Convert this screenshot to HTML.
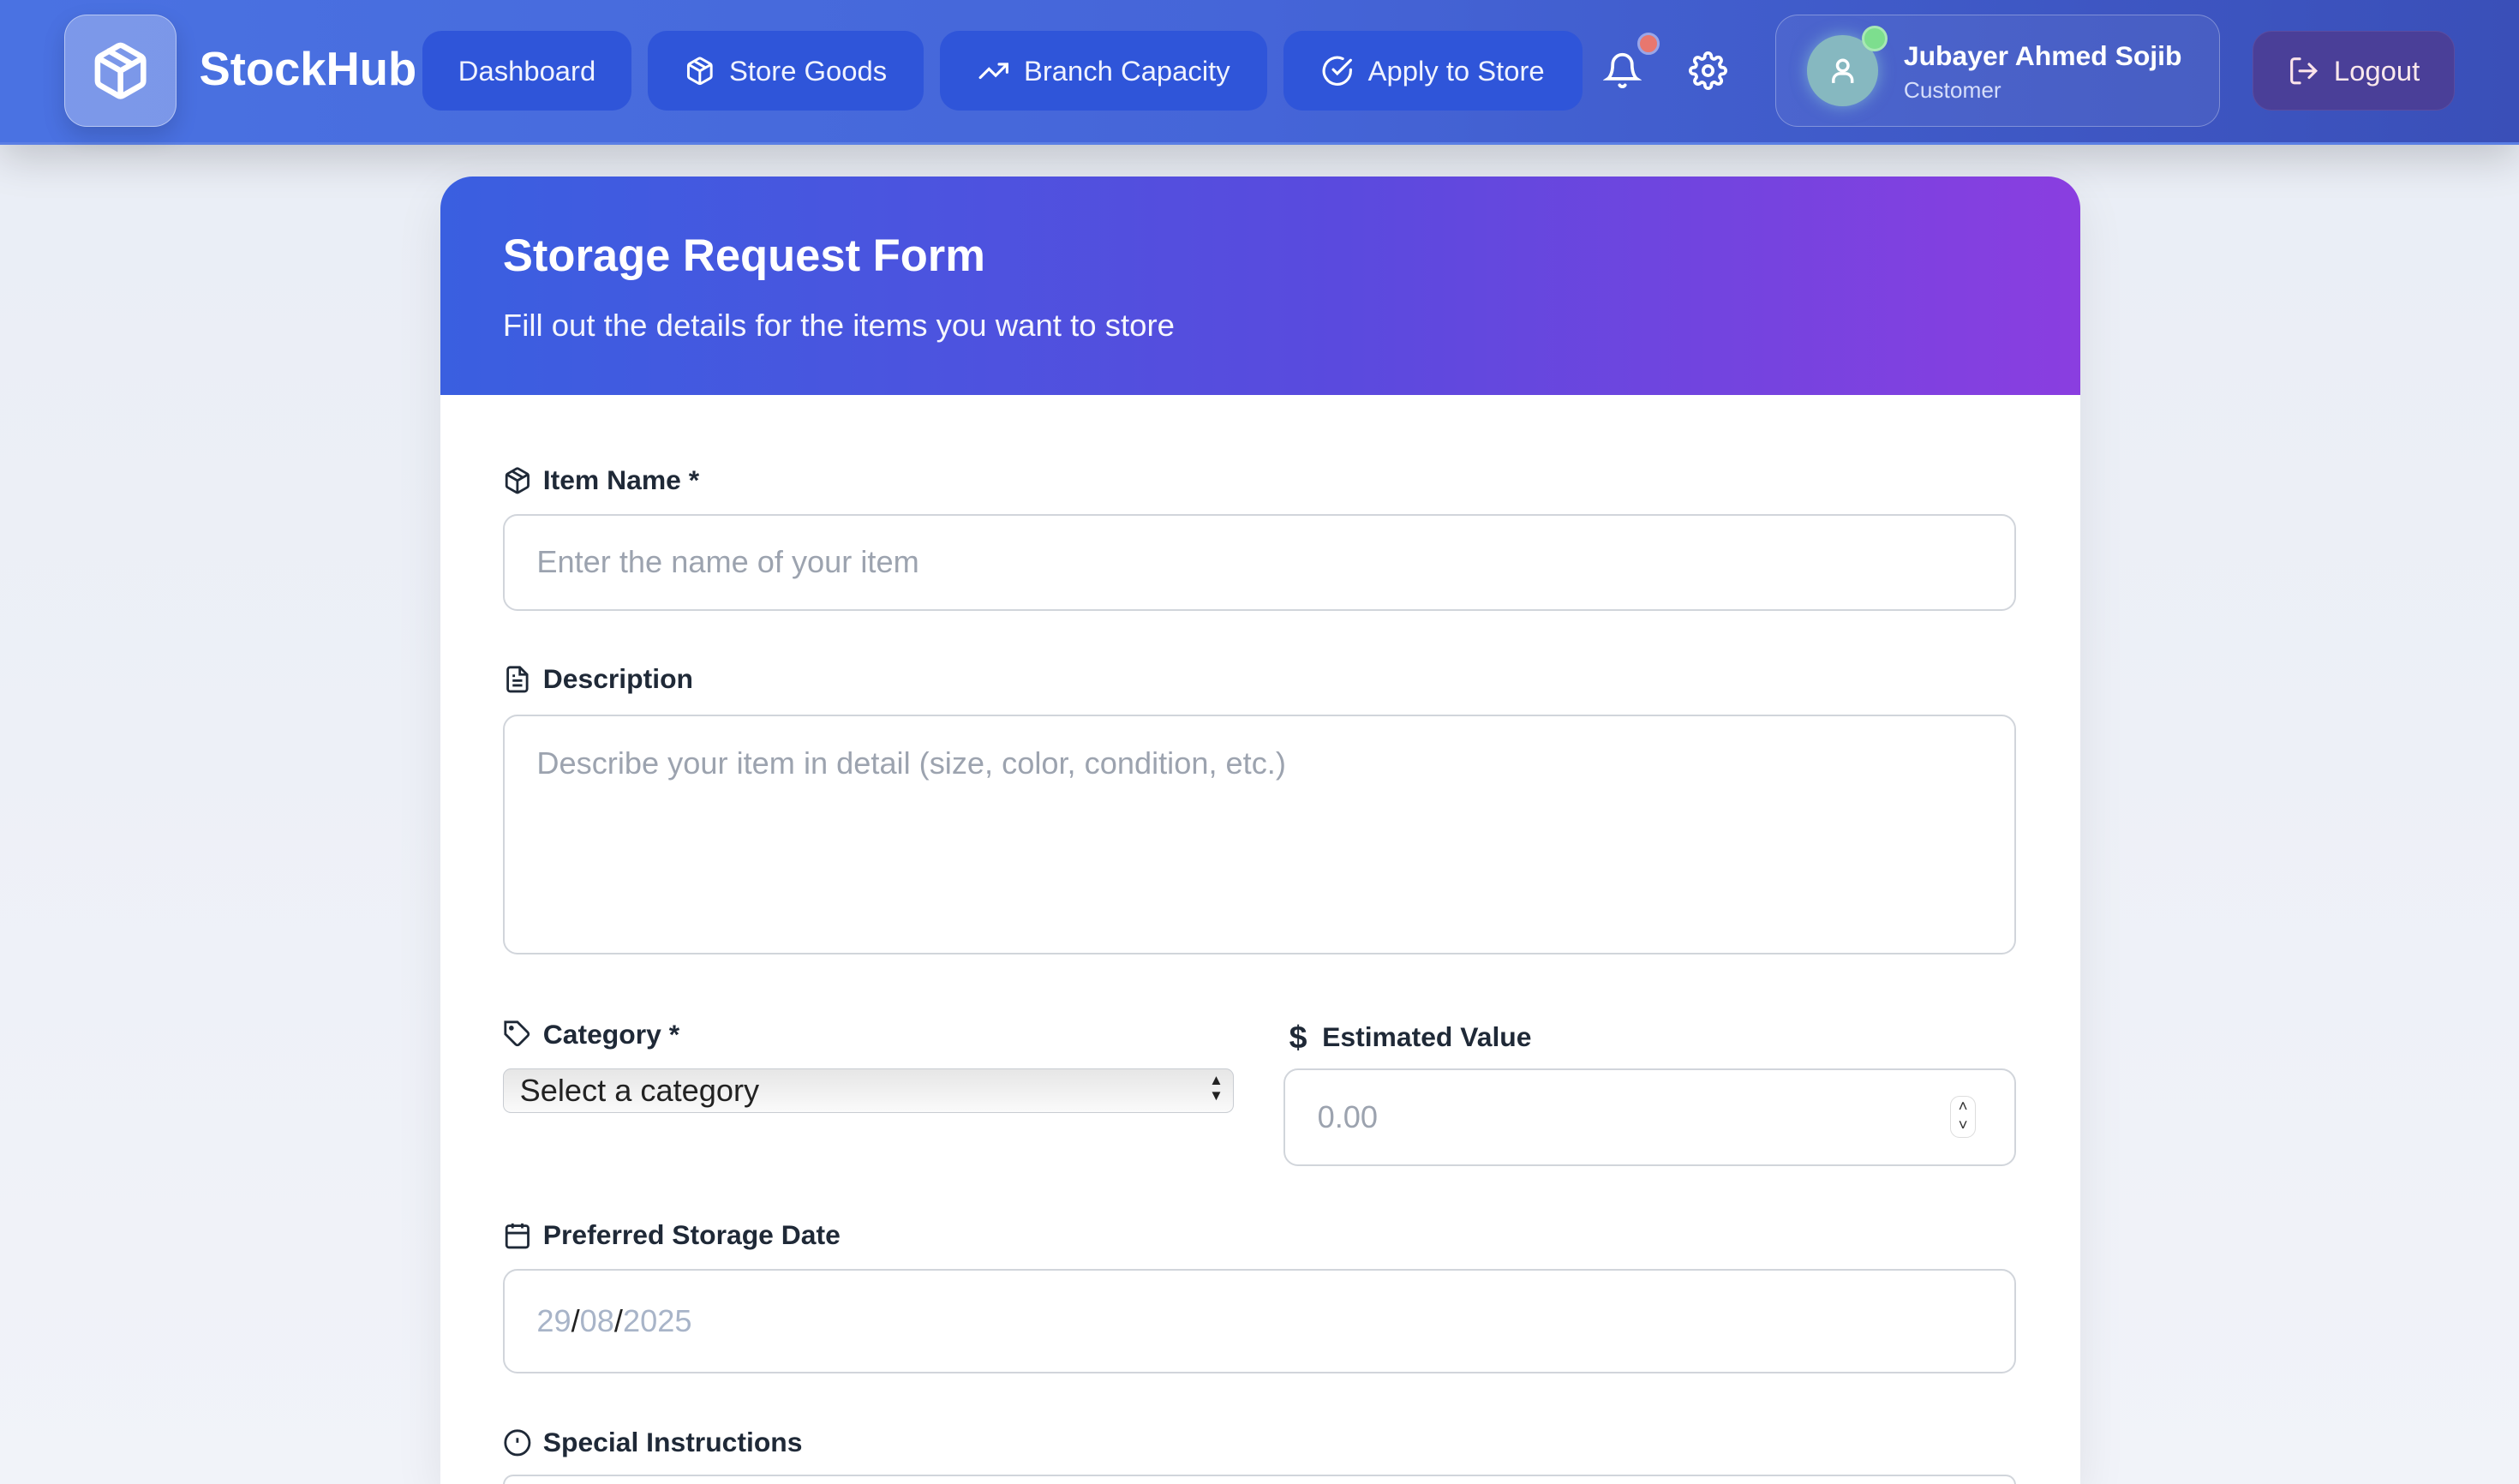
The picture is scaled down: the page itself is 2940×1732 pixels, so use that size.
<!DOCTYPE html>
<html><head><meta charset="utf-8"><style>
*{box-sizing:border-box;margin:0;padding:0}
html,body{width:2940px;height:1732px;overflow:hidden}
body{background:#eef1f7;font-family:"Liberation Sans",sans-serif}
#r{zoom:1.875;width:1568px;height:924px;position:relative;overflow:hidden;background:linear-gradient(180deg,#e9edf5,#f1f3f9)}
.hdr{position:absolute;left:0;top:0;width:1568px;height:90px;background:linear-gradient(90deg,#4a72e2,#4565d8 50%,#3a4fb8);border-bottom:2px solid #5b7fe4;box-shadow:0 8px 24px rgba(0,0,0,.18)}
.abs{position:absolute}
.logo{left:40px;top:9px;width:70px;height:70px;border-radius:14px;background:rgba(255,255,255,.28);border:1px solid rgba(255,255,255,.45);display:flex;align-items:center;justify-content:center;box-shadow:0 6px 14px rgba(0,0,0,.15)}
.brand{left:124px;top:26px;font-size:29px;font-weight:bold;color:#fff}
.nb{top:19px;height:50px;border-radius:12px;background:#2f55d9;color:#f0f3ff;font-size:17.5px;display:flex;align-items:center;justify-content:center;gap:9px}
.user{left:1105px;top:9px;width:277px;height:70px;border-radius:14px;border:1px solid rgba(255,255,255,.3);background:rgba(255,255,255,.06)}
.card{left:274px;top:110px;width:1021px;height:814px;border-radius:20px 20px 0 0;background:#fff;overflow:hidden;box-shadow:0 10px 30px rgba(0,0,0,.08)}
.ch{height:136px;background:linear-gradient(90deg,#3a5fe0,#5a4ade 55%,#8a3ee0);color:#fff;padding:33px 39px}
.ch h1{font-size:28px;font-weight:bold}
.ch p{font-size:19.5px;margin-top:16px;opacity:.95}
.lab{font-size:17px;font-weight:bold;color:#1f2937;display:flex;align-items:center;gap:7px}
.inp{border:1.5px solid #d1d5db;border-radius:9px;background:#fff;font-size:19.3px;color:#9ca3af;padding-left:20px;display:flex;align-items:center}
</style></head><body><div id="r">
<div class="hdr">
 <div class="abs logo"><svg width="38" height="38" viewBox="0 0 24 24" fill="none" stroke="#fff" stroke-width="2.2" stroke-linecap="round" stroke-linejoin="round"><path d="M21 16V8a2 2 0 0 0-1-1.73l-7-4a2 2 0 0 0-2 0l-7 4A2 2 0 0 0 3 8v8a2 2 0 0 0 1 1.730l7 4a2 2 0 0 0 2 0l7-4A2 2 0 0 0 21 16z"/><path d="M3.3 7L12 12l8.7-5M12 22V12M7.5 4.2l9 5.2"/></svg></div>
 <div class="abs brand">StockHub</div>
 <div class="abs nb" style="left:263px;width:130px">Dashboard</div>
 <div class="abs nb" style="left:403px;width:172px"><svg width="19" height="19" viewBox="0 0 24 24" fill="none" stroke="#fff" stroke-width="2"><path d="M21 16V8a2 2 0 0 0-1-1.73l-7-4a2 2 0 0 0-2 0l-7 4A2 2 0 0 0 3 8v8a2 2 0 0 0 1 1.73l7 4a2 2 0 0 0 2 0l7-4A2 2 0 0 0 21 16z"/><path d="M3.3 7L12 12l8.7-5M12 22V12M7.5 4.2l9 5.2"/></svg>Store Goods</div>
 <div class="abs nb" style="left:585px;width:204px"><svg width="20" height="20" viewBox="0 0 24 24" fill="none" stroke="#fff" stroke-width="2" stroke-linecap="round"><path d="M22 7l-8.5 8.5-5-5L2 17M16 7h6v6"/></svg>Branch Capacity</div>
 <div class="abs nb" style="left:799px;width:186px"><svg width="20" height="20" viewBox="0 0 24 24" fill="none" stroke="#fff" stroke-width="2" stroke-linecap="round"><path d="M22 11.1V12a10 10 0 1 1-5.9-9.1"/><path d="M22 4L12 14l-3-3"/></svg>Apply to Store</div>
 <svg class="abs" style="left:998px;top:32px" width="24" height="24" viewBox="0 0 24 24" fill="none" stroke="#fff" stroke-width="2" stroke-linecap="round"><path d="M18 8A6 6 0 0 0 6 8c0 7-3 9-3 9h18s-3-2-3-9M13.7 21a2 2 0 0 1-3.4 0"/></svg>
 <div class="abs" style="left:1019px;top:20px;width:14px;height:14px;border-radius:50%;background:#e8776e;border:2px solid #9aa6e8"></div>
 <svg class="abs" style="left:1051px;top:32px" width="24" height="24" viewBox="0 0 24 24" fill="none" stroke="#fff" stroke-width="2"><circle cx="12" cy="12" r="3"/><path d="M19.4 15a1.65 1.65 0 0 0 .33 1.82l.06.06a2 2 0 1 1-2.83 2.83l-.06-.06a1.65 1.65 0 0 0-1.82-.33 1.65 1.65 0 0 0-1 1.51V21a2 2 0 1 1-4 0v-.09A1.65 1.65 0 0 0 9 19.4a1.65 1.65 0 0 0-1.82.33l-.06.06a2 2 0 1 1-2.83-2.83l.06-.06A1.65 1.65 0 0 0 4.6 15a1.65 1.65 0 0 0-1.51-1H3a2 2 0 1 1 0-4h.09A1.65 1.65 0 0 0 4.6 9a1.65 1.65 0 0 0-.33-1.82l-.06-.06a2 2 0 1 1 2.83-2.830l.06.06A1.65 1.65 0 0 0 9 4.6a1.65 1.65 0 0 0 1-1.51V3a2 2 0 1 1 4 0v.09a1.65 1.65 0 0 0 1 1.51 1.65 1.65 0 0 0 1.82-.33l.06-.06a2 2 0 1 1 2.83 2.83l-.06.06A1.65 1.65 0 0 0 19.4 9a1.65 1.65 0 0 0 1.51 1H21a2 2 0 1 1 0 4h-.09a1.65 1.65 0 0 0-1.51 1z"/></svg>
 <div class="abs user"></div>
 <div class="abs" style="left:1125px;top:22px;width:44px;height:44px;border-radius:50%;background:#86b8c0;box-shadow:0 0 10px rgba(160,230,220,.5);display:flex;align-items:center;justify-content:center"><svg width="20" height="20" viewBox="0 0 24 24" fill="none" stroke="#fff" stroke-width="2.2"><circle cx="12" cy="8" r="4"/><path d="M5 21v-2a5 5 0 0 1 5-5h4a5 5 0 0 1 5 5v2"/></svg></div>
 <div class="abs" style="left:1159px;top:16px;width:16px;height:16px;border-radius:50%;background:#7dde8e;border:2px solid #a8e8b4"></div>
 <div class="abs" style="left:1185px;top:25px;font-size:17px;font-weight:bold;color:#fff">Jubayer Ahmed Sojib</div>
 <div class="abs" style="left:1185px;top:48px;font-size:14px;color:#d6defa">Customer</div>
 <div class="abs nb" style="left:1402px;width:126px;background:#4a3f98;border:1px solid #5a4ca0;color:#fbe8ec"><svg width="20" height="20" viewBox="0 0 24 24" fill="none" stroke="#fce4ea" stroke-width="2" stroke-linecap="round"><path d="M9 21H5a2 2 0 0 1-2-2V5a2 2 0 0 1 2-2h4M16 17l5-5-5-5M21 12H9"/></svg>Logout</div>
</div>
<div class="abs card">
 <div class="ch"><h1>Storage Request Form</h1><p>Fill out the details for the items you want to store</p></div>
</div>
<div class="abs lab" style="left:313px;top:289px"><svg width="18" height="18" viewBox="0 0 24 24" fill="none" stroke="#1f2937" stroke-width="2"><path d="M21 16V8a2 2 0 0 0-1-1.73l-7-4a2 2 0 0 0-2 0l-7 4A2 2 0 0 0 3 8v8a2 2 0 0 0 1 1.73l7 4a2 2 0 0 0 2 0l7-4A2 2 0 0 0 21 16z"/><path d="M3.3 7L12 12l8.7-5M12 22V12M7.5 4.2l9 5.2"/></svg>Item Name *</div>
<div class="abs inp" style="left:313px;top:320px;width:942px;height:60px">Enter the name of your item</div>
<div class="abs lab" style="left:313px;top:413px"><svg width="18" height="18" viewBox="0 0 24 24" fill="none" stroke="#1f2937" stroke-width="2"><path d="M14 2H6a2 2 0 0 0-2 2v16a2 2 0 0 0 2 2h12a2 2 0 0 0 2-2V8z"/><path d="M14 2v6h6M16 13H8M16 17H8M10 9H8"/></svg>Description</div>
<div class="abs inp" style="left:313px;top:445px;width:942px;height:149px;align-items:flex-start;padding-top:18px">Describe your item in detail (size, color, condition, etc.)</div>
<div class="abs lab" style="left:313px;top:634px"><svg width="18" height="18" viewBox="0 0 24 24" fill="none" stroke="#1f2937" stroke-width="2"><path d="M20.6 13.4l-7.2 7.2a2 2 0 0 1-2.8 0L2 12V2h10l8.6 8.6a2 2 0 0 1 0 2.8z"/><circle cx="7" cy="7" r="1"/></svg>Category *</div>
<div class="abs" style="left:313px;top:665px;width:455px;height:28px;border:1px solid #c8ccd2;border-radius:5px;background:linear-gradient(#e6e6e6,#fafafa);font-size:19.3px;color:#222;padding-left:10px;display:flex;align-items:center">Select a category<span style="position:absolute;right:6px;top:2px;font-size:9px;line-height:10px;color:#222">▲<br>▼</span></div>
<div class="abs lab" style="left:800px;top:634px"><span style="font-size:20px;width:16px;text-align:center">$</span>Estimated Value</div>
<div class="abs inp" style="left:799px;top:665px;width:456px;height:61px">0.00<span style="position:absolute;right:24px;top:16px;width:16px;height:26px;border:1px solid #ddd;border-radius:6px;font-size:10px;color:#333;text-align:center;line-height:12px">˄<br>˅</span></div>
<div class="abs lab" style="left:313px;top:759px"><svg width="18" height="18" viewBox="0 0 24 24" fill="none" stroke="#1f2937" stroke-width="2"><rect x="3" y="4" width="18" height="18" rx="2"/><path d="M16 2v4M8 2v4M3 10h18"/></svg>Preferred Storage Date</div>
<div class="abs inp" style="left:313px;top:790px;width:942px;height:65px;color:#a8b4c8">29<span style="color:#222">/</span>08<span style="color:#222">/</span>2025</div>
<div class="abs lab" style="left:313px;top:888px"><svg width="18" height="18" viewBox="0 0 24 24" fill="none" stroke="#1f2937" stroke-width="2"><circle cx="12" cy="12" r="10"/><path d="M12 8v4M12 16h.01"/></svg>Special Instructions</div>
<div class="abs inp" style="left:313px;top:918px;width:942px;height:6px;border-bottom:none;border-radius:9px 9px 0 0"></div>
</div></body></html>
